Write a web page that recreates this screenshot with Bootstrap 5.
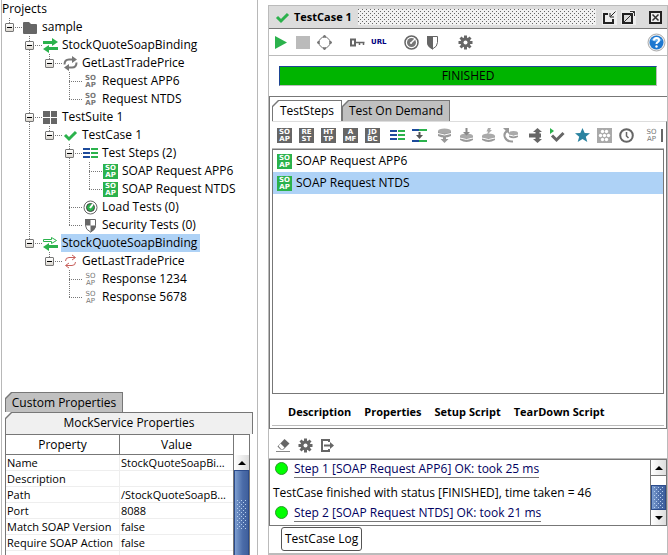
<!DOCTYPE html>
<html lang="en">
<head>
<meta charset="utf-8">
<meta name="viewport" content="width=device-width, initial-scale=1">
<title>TestCase 1</title>
<link rel="stylesheet" href="https://cdn.jsdelivr.net/npm/bootstrap@5.3.0/dist/css/bootstrap.min.css">
<style>
  body { font-family: "Open Sans", "Noto Sans", sans-serif; font-size: 12px; line-height: 18px; color: #000; background: #fff; }
  button { font: inherit; color: inherit; padding: 0; border: 0; background: none; }
  svg { display: block; flex: none; }
  .app { height: 100vh; }
  .side { width: 257px; margin-left: 1px; border-left: 1px solid #b8b8b8; border-right: 1px solid #b8b8b8; }

  /* project tree */
  .tree, .tree ul { list-style: none; margin: 0; padding: 0; }
  .tree { padding-left: 3px; }
  .tree ul { padding-left: 20px; }
  .tree li {
    background:
      repeating-linear-gradient(to bottom, #777 0 1px, transparent 1px 2px) 4px 0 / 1px 100% no-repeat,
      repeating-linear-gradient(to right, #777 0 1px, transparent 1px 2px) 4px 9px / 13px 1px no-repeat;
  }
  .tree li:last-child { background-size: 1px 9px, 13px 1px; }
  .node { height: 18px; white-space: nowrap; }
  .fold { width: 9px; height: 9px; border: 1px solid #777; border-radius: 1px; background: linear-gradient(#000, #000) center / 5px 1px no-repeat, linear-gradient(#fff, #dcd8d0); flex: none; margin-right: 9px; }
  .leaf { padding-left: 18px; }
  .node-text { margin-left: 3px; padding: 0 3px 0 1px; }
  .picked { background: #aed2f6; }

  /* small square icons made of four letters */
  .chip { display: block; flex: none; width: 15px; height: 15px; padding-top: 1px; text-align: center; white-space: nowrap; font: 700 7px/7px "DejaVu Sans", sans-serif; color: #777; overflow: hidden; }
  .chip-gray { background: #666; color: #fff; }
  .chip-green { background: #2bb24c; color: #fff; }
  .chip-light { color: #777; font-weight: 400; }

  /* tabs with a cut top-left corner */
  .cut-tab { background: #777; padding: 1px 1px 0; clip-path: polygon(0 6px, 6px 0, 100% 0, 100% 100%, 0 100%); }
  .cut-face { display: block; background: #c0c0c0; clip-path: polygon(0 6px, 6px 0, 100% 0, 100% 100%, 0 100%); }
  .face-gray { background: #f0f0f0; }
  .face-white { background: #fff; }
  .props { margin: 0 4px 0 3px; height: 163px; }
  .props-tab1 { width: 118px; height: 20px; line-height: 20px; }
  .props-tab2 { height: 21px; line-height: 20px; }
  .props-box { border: 1px solid #777; border-bottom: 0; margin-right: 3px; }
  .props-grid { table-layout: fixed; border-collapse: separate; border-spacing: 0; }
  .props-grid th { height: 20px; padding: 0; font-weight: 400; text-align: center; border-right: 1px solid #777; border-bottom: 1px solid #777; line-height: 19px; }
  .props-grid td { height: 16px; font-size: 11px; line-height: 15px; padding: 0 1px; border-right: 1px solid #eee; border-bottom: 1px solid #eee; white-space: nowrap; overflow: hidden; text-overflow: ellipsis; }
  .scroll { width: 16px; flex: none; }
  .scroll-props { padding-top: 20px; border-left: 1px solid #777; margin-left: -1px; }
  .scroll-btn { height: 15px; background: linear-gradient(90deg, #fff, #ddd); display: flex; align-items: center; justify-content: center; flex: none; }
  .thumb { background: linear-gradient(90deg, #7d9ed0, #4a6ba8 60%, #40609c); border: 1px solid #2c4c8c; padding: 1px; }
  .grip { margin: 0 1px; background: conic-gradient(at 1px 1px, transparent 75%, #b8d0f0 0) 0 0 / 4px 4px, conic-gradient(at 1px 1px, transparent 75%, #b8d0f0 0) 2px 2px / 4px 4px; }
  .grip-props { height: 30px; margin-top: 28px; }

  /* test case window */
  .win { margin: 5px 0 0 10px; border: 1px solid #bbb; border-bottom-width: 2px; min-width: 0; }
  .win-title { height: 23px; background: #dcdcdc; border-bottom: 1px solid #777; padding: 0 4px 0 6px; }
  .win-title h1 { font-size: 11px; font-weight: 700; line-height: 20px; margin: 0 6px 0 4px; }
  .hatch { height: 16px; background: conic-gradient(at 1px 1px, transparent 75%, #666 0) 0 0 / 4px 4px, conic-gradient(at 1px 1px, transparent 75%, #666 0) 2px 2px / 4px 4px, #f2f2f2; }
  .win-keys { margin-left: 6px; }
  .bar { height: 27px; gap: 18px; border-bottom: 1px solid #bbb; padding: 0 1px 0 6px; }
  .bar-set { gap: 6px; }
  .url { color: #000080; font: 700 7px/12px "DejaVu Sans", sans-serif; width: 15px; white-space: nowrap; }
  .done { margin: 10px; height: 20px; line-height: 17px; background: #00b400; border: 1px solid #bbb; border-top-color: #1d4594; border-left-color: #1d4594; text-align: center; }
  .steps { border: 1px solid #777; border-right: 0; padding: 3px 0 0 2px; min-height: 0; }
  .steps .cut-tab { line-height: 20px; }
  .steps .cut-face { height: 20px; }
  .tab-a { width: 70px; }
  .tab-b { width: 108px; }
  .steps-body { border-top: 1px solid #ddd; border-right: 1px solid #777; padding: 0 2px 2px 0; min-height: 0; }
  .steps-tools { height: 27px; gap: 10px; padding-left: 5px; overflow: hidden; border-bottom: 1px solid #bbb; }
  .steps-set { gap: 7px; }
  .steps-end { gap: 2px; }
  .steps-list { border: 1px solid #777; }
  .step { height: 22px; padding: 0 4px; gap: 4px; text-align: left; }
  .scripts { gap: 13px; height: 32px; padding: 4px 0 0 16px; border-bottom: 1px solid #bbb; white-space: nowrap; font-size: 11px; font-weight: 700; }
  .log-tools { height: 30px; gap: 7px; padding: 4px 0 0 7px; border-bottom: 1px solid #bbb; }
  .log { border: 1px solid #777; height: 67px; }
  .log-lines { min-width: 0; white-space: nowrap; overflow: hidden; }
  .log-line { height: 22px; padding-left: 5px; }
  .log-line a { color: #000060; line-height: 17px; text-decoration: none; border-bottom: 1px solid #777; }
  .log-note { padding: 2px 0 0 3px; height: 22px; }
  .dot { width: 13px; height: 13px; border-radius: 50%; background: #0f0; border: 1px solid #2a9a2a; margin: 2px 6px 0 0; flex: none; }
  .scroll-log { border-left: 1px solid #777; }
  .track { height: 10px; border-top: 1px solid #777; }
  .log-foot { height: 27px; padding: 1px 0 0 12px; }
  .log-foot button { border: 1px solid #555; border-radius: 3px; padding: 0 3px; height: 24px; line-height: 22px; }
</style>
<script src="https://cdn.jsdelivr.net/npm/bootstrap@5.3.0/dist/js/bootstrap.bundle.min.js"></script>
</head>
<body>
<svg width="0" height="0" class="position-absolute" aria-hidden="true">
  <symbol id="check" viewBox="0 0 15 15"><path d="M2 7l4 4 7-7" fill="none" stroke="#2bb24c" stroke-width="3"/></symbol>
  <symbol id="gear" viewBox="0 0 15 15"><path d="M7.500 .5v14M.5 7.500h14M2.500 2.500l10 10M12.500 2.500l-10 10" stroke="#666" stroke-width="3"/><circle cx="7.500" cy="7.500" r="5" fill="#666"/><circle cx="7.500" cy="7.500" r="2" fill="#fff"/></symbol>
  <symbol id="rows" viewBox="0 0 15 15"><path d="M0 3h7M0 7h7M0 11h7" stroke="#1d4b9b" stroke-width="2"/><path d="M8 3h7M8 7h7M8 11h7" stroke="#2bb24c" stroke-width="2"/></symbol>
</svg>

<div class="app d-flex overflow-hidden">
  <aside class="side d-flex flex-column flex-shrink-0">
    <div>Projects</div>
    <ul class="tree flex-grow-1">
      <li><div class="node d-flex align-items-center"><button class="fold" aria-label="Collapse sample"></button><svg width="15" height="15"><path d="M0 3q0-1 1-1h5l2 2h5q1 0 1 1v8q0 1-1 1H1q-1 0-1-1z" fill="#666"/></svg><span class="node-text">sample</span></div>
        <ul>
          <li><div class="node d-flex align-items-center"><button class="fold" aria-label="Collapse binding"></button><svg width="15" height="15"><path d="M0 3h9V0l6 4-6 4V6H0zM15 9H6V7l-6 4 6 4v-3h9z" fill="#2bb24c"/></svg><span class="node-text">StockQuoteSoapBinding</span></div>
            <ul><li><div class="node d-flex align-items-center"><button class="fold" aria-label="Collapse operation"></button><svg width="15" height="15"><path d="M1.500 8.500q0-5 4.500-5h4M13.500 6.500q0 5-4.500 5H5" fill="none" stroke="#777" stroke-width="2"/><path d="M9 0l5 3.500L9 7zM6 8l-5 3.500L6 15z" fill="#777"/></svg><span class="node-text">GetLastTradePrice</span></div>
              <ul>
                <li><div class="node leaf d-flex align-items-center"><span class="chip">SO<br>AP</span><span class="node-text">Request APP6</span></div></li>
                <li><div class="node leaf d-flex align-items-center"><span class="chip">SO<br>AP</span><span class="node-text">Request NTDS</span></div></li>
              </ul></li></ul></li>
          <li><div class="node d-flex align-items-center"><button class="fold" aria-label="Collapse suite"></button><svg width="15" height="15"><path d="M0 1h7v6H0zM8 1h6v6H8zM0 8h7v6H0zM8 8h6v6H8z" fill="#666"/></svg><span class="node-text">TestSuite 1</span></div>
            <ul><li><div class="node d-flex align-items-center"><button class="fold" aria-label="Collapse test case"></button><svg width="15" height="15"><use href="#check"/></svg><span class="node-text">TestCase 1</span></div>
              <ul>
                <li><div class="node d-flex align-items-center"><button class="fold" aria-label="Collapse steps"></button><svg width="15" height="15"><use href="#rows"/></svg><span class="node-text">Test Steps (2)</span></div>
                  <ul>
                    <li><div class="node leaf d-flex align-items-center"><span class="chip chip-green">SO<br>AP</span><span class="node-text">SOAP Request APP6</span></div></li>
                    <li><div class="node leaf d-flex align-items-center"><span class="chip chip-green">SO<br>AP</span><span class="node-text">SOAP Request NTDS</span></div></li>
                  </ul></li>
                <li><div class="node leaf d-flex align-items-center"><svg width="15" height="15"><circle cx="7.500" cy="7.500" r="6.500" fill="#fff" stroke="#666"/><circle cx="7.500" cy="7.500" r="4" fill="#2bb24c" stroke="#444"/><path d="M7 8l3-4" stroke="#fff" stroke-width="2"/></svg><span class="node-text">Load Tests (0)</span></div></li>
                <li><div class="node leaf d-flex align-items-center"><svg width="15" height="15"><path d="M2.500 1.500h10v6q0 4-5 6.500q-5-2.500-5-6.500z" fill="#fff" stroke="#666"/><path d="M2 1h5.500v6.500H2zM7.500 7.500H13q0 4-5.500 7z" fill="#666"/></svg><span class="node-text">Security Tests (0)</span></div></li>
              </ul></li></ul></li>
          <li><div class="node d-flex align-items-center"><button class="fold" aria-label="Collapse mock service"></button><svg width="15" height="15"><path d="M.5 3.500h8v-2l5 3-5 3v-2h-8z" fill="#fff" stroke="#2bb24c"/><path d="M15 9H6V7l-6 4 6 4v-3h9z" fill="#2bb24c"/></svg><span class="node-text picked">StockQuoteSoapBinding</span></div>
            <ul><li><div class="node d-flex align-items-center"><button class="fold" aria-label="Collapse mock operation"></button><svg width="15" height="15"><path d="M2.500 7q0-3.500 3.500-3.500h6M9 1l3.500 2.500L9 6M12.500 8q0 3.500-3.500 3.500H3M6 9l-3.500 2.500L6 14" fill="none" stroke="#c8605c"/></svg><span class="node-text">GetLastTradePrice</span></div>
              <ul>
                <li><div class="node leaf d-flex align-items-center"><span class="chip chip-light">SO<br>AP</span><span class="node-text">Response 1234</span></div></li>
                <li><div class="node leaf d-flex align-items-center"><span class="chip chip-light">SO<br>AP</span><span class="node-text">Response 5678</span></div></li>
              </ul></li></ul></li>
        </ul></li>
    </ul>

    <section class="props overflow-hidden flex-shrink-0">
      <button class="cut-tab props-tab1 d-block"><span class="cut-face">Custom Properties</span></button>
      <button class="cut-tab d-block w-100"><span class="cut-face face-gray props-tab2">MockService Properties</span></button>
      <div class="props-box d-flex">
        <div class="flex-grow-1">
        <table class="props-grid w-100">
          <thead><tr><th>Property</th><th>Value</th></tr></thead>
          <tbody>
            <tr><td>Name</td><td>StockQuoteSoapBi...</td></tr>
            <tr><td>Description</td><td></td></tr>
            <tr><td>Path</td><td>/StockQuoteSoapB...</td></tr>
            <tr><td>Port</td><td>8088</td></tr>
            <tr><td>Match SOAP Version</td><td>false</td></tr>
            <tr><td>Require SOAP Action</td><td>false</td></tr>
            <tr><td>Dispatch Responses</td><td>false</td></tr>
          </tbody>
        </table>
        </div>
        <div class="scroll scroll-props d-flex flex-column">
          <button class="scroll-btn" aria-label="Scroll properties up"><svg width="8" height="4"><path d="M0 4l4-4 4 4z"/></svg></button>
          <div class="thumb flex-grow-1"><div class="grip grip-props"></div></div>
        </div>
      </div>
    </section>
  </aside>

  <main class="win d-flex flex-column flex-grow-1">
    <header class="win-title d-flex align-items-center flex-shrink-0">
      <svg width="15" height="15"><use href="#check"/></svg><h1>TestCase 1</h1><div class="hatch flex-grow-1"></div>
      <div class="win-keys d-flex">
        <button aria-label="Restore"><svg width="15" height="15"><path d="M0 0h15v15H0z" fill="#eee"/><path d="M6 4H2v9h9V9" fill="none" stroke="#222" stroke-width="2"/><path d="M13.500 1.500l-5 5M8 3v4h4" fill="none" stroke="#222"/></svg></button>
        <button class="ms-1" aria-label="Maximize"><svg width="15" height="15"><path d="M0 0h15v15H0z" fill="#eee"/><path d="M2 4h9v9H2z" fill="#ddd" stroke="#222" stroke-width="2"/><path d="M3 12L13.500 1.500M9 1.500h4.500V6" fill="none" stroke="#333"/></svg></button>
        <button class="ms-2 ps-1" aria-label="Close"><svg width="15" height="15"><path d="M2 2h11v11H2z" fill="#eee" stroke="#222" stroke-width="2"/><path d="M4.500 4.500l6 6M10.500 4.500l-6 6" stroke="#333" stroke-width="1.500"/></svg></button>
      </div>
    </header>
    <div class="bar d-flex align-items-center flex-shrink-0">
      <div class="bar-set d-flex align-items-center">
        <button aria-label="Run"><svg width="15" height="15"><path d="M0 1l12 6.500L0 14z" fill="#2bb24c"/></svg></button>
        <button aria-label="Stop"><svg width="15" height="15"><path d="M0 1h14v13H0z" fill="#bbb"/></svg></button>
        <button aria-label="Loop"><svg width="15" height="15"><circle cx="7.500" cy="7.500" r="5.500" fill="none" stroke="#777"/><path d="M6 2h3L7.500 0zM6 13h3l-1.500 2zM2 6v3L0 7.500zM13 6v3l2-1.500z" fill="#777" stroke="#777"/></svg></button>
      </div>
      <div class="bar-set d-flex align-items-center">
        <button aria-label="Credentials"><svg width="15" height="15"><path d="M1 4.500h4v6H1z" fill="none" stroke="#666" stroke-width="2"/><path d="M6 7.500h8.500M9.500 8v2M13.500 8v2" fill="none" stroke="#666" stroke-width="1.500"/></svg></button>
        <button class="url">URL</button>
      </div>
      <div class="bar-set d-flex align-items-center">
        <button aria-label="Load test"><svg width="15" height="15"><circle cx="7.500" cy="7.500" r="6.500" fill="#fff" stroke="#666" stroke-width="1.500"/><circle cx="7.500" cy="7.500" r="4.500" fill="#777"/><path d="M7 8l4-4" stroke="#fff" stroke-width="1.500"/><circle cx="7" cy="8" r="1" fill="#fff"/></svg></button>
        <button aria-label="Security test"><svg width="15" height="15"><path d="M2.500 1.500h10v6q0 4-5 6.500q-5-2.500-5-6.500z" fill="#fff" stroke="#666"/><path d="M2 1h6v13.500Q2 12 2 7.500z" fill="#666"/></svg></button>
      </div>
      <button aria-label="Options"><svg width="15" height="15"><use href="#gear"/></svg></button>
      <button class="ms-auto" aria-label="Help"><svg width="19" height="19"><circle cx="9.500" cy="9.500" r="8.500" fill="#eee" stroke="#aaa"/><circle cx="9.500" cy="9.500" r="7" fill="#1e78d0"/><path d="M4 7q5-6 11 0q-4 3-11 0z" fill="#6fb4ee"/><path d="M7 7.500q0-2.500 2.500-2.500T12 7.200q0 1.300-1.300 2T9.500 11" fill="none" stroke="#fff" stroke-width="2"/><circle cx="9.500" cy="13.500" r="1.200" fill="#fff"/></svg></button>
    </div>
    <div class="done flex-shrink-0" role="status">FINISHED</div>

    <section class="steps d-flex flex-column flex-grow-1">
      <div class="d-flex flex-shrink-0">
        <button class="cut-tab tab-a"><span class="cut-face face-white">TestSteps</span></button>
        <button class="cut-tab tab-b"><span class="cut-face">Test On Demand</span></button>
      </div>
      <div class="steps-body d-flex flex-column flex-grow-1">
        <div class="steps-tools d-flex align-items-center flex-shrink-0">
          <div class="steps-set d-flex">
            <button class="chip chip-gray">SO<br>AP</button>
            <button class="chip chip-gray">RE<br>ST</button>
            <button class="chip chip-gray">HT<br>TP</button>
            <button class="chip chip-gray">A<br>MF</button>
            <button class="chip chip-gray">JD<br>BC</button>
          </div>
          <div class="steps-set d-flex">
            <button aria-label="Properties step"><svg width="15" height="15"><use href="#rows"/></svg></button>
            <button aria-label="Transfer step"><svg width="15" height="15"><path d="M0 2h7M0 13h7" stroke="#1d4b9b" stroke-width="2"/><path d="M7 2h8M7 13h8" stroke="#2bb24c" stroke-width="2"/><path d="M7.500 4v4" stroke="#555" stroke-width="2"/><path d="M4 7h7l-3.500 4z" fill="#555"/></svg></button>
          </div>
          <div class="steps-set d-flex">
            <button aria-label="Data source"><svg width="15" height="15"><path d="M1 3v5q6.500 3 13 0V3z" fill="#999"/><ellipse cx="7.500" cy="3" rx="6.500" ry="2.500" fill="#aaa"/><path d="M1 5.500q6.500 3 13 0" fill="none" stroke="#fff"/><path d="M6 9h3v2h2.500l-4 4-4-4H6z" fill="#999"/></svg></button>
            <button aria-label="Data sink"><svg width="15" height="15"><path d="M1 8v4q6.500 4 13 0V8z" fill="#999"/><ellipse cx="7.500" cy="8" rx="6.500" ry="2.500" fill="#aaa"/><path d="M1 10q6.500 3 13 0" fill="none" stroke="#fff"/><path d="M6.500 0h2v4H11L7.500 7.500 4 4h2.500z" fill="#888"/></svg></button>
            <button aria-label="Data generator"><svg width="15" height="15"><path d="M1 8v4q6.500 4 13 0V8z" fill="#999"/><ellipse cx="7.500" cy="8" rx="6.500" ry="2.500" fill="#aaa"/><path d="M1 10q6.500 3 13 0" fill="none" stroke="#fff"/><path d="M7 0h3L9 2h2L6 7l1-3.500H5.500z" fill="#aaa"/></svg></button>
            <button aria-label="Data source loop"><svg width="15" height="15"><path d="M5 2.500Q0 5 2 9.500t8 4" fill="none" stroke="#999" stroke-width="2"/><path d="M0 0h6v6z" fill="#999"/><path d="M6 5v4q4 2.500 9 0V5z" fill="#999"/><ellipse cx="10.500" cy="5" rx="4.500" ry="2" fill="#aaa"/><path d="M6 7q4.500 2 9 0" fill="none" stroke="#fff"/></svg></button>
          </div>
          <div class="steps-set d-flex">
            <button aria-label="Conditional goto"><svg width="15" height="15"><path d="M1 7.500h8M9.500 3v9M9.500 7.500H13" stroke="#666" stroke-width="4"/><path d="M5 4h9L9.500 0zM5 11h9l-4.500 4z" fill="#666"/></svg></button>
            <button aria-label="Run test case"><svg width="15" height="15"><path d="M0 0l4 3-4 3z" fill="#2bb24c"/><path d="M2 7.500l4.500 4.500L13.500 5" fill="none" stroke="#666" stroke-width="3"/></svg></button>
          </div>
          <div class="steps-set d-flex">
            <button aria-label="Groovy script"><svg width="15" height="15"><path d="M7.500 0l2.200 5 5.300.3-4.200 3.500 1.500 5.200-4.800-3-4.800 3 1.500-5.200L0 5.300 5.300 5z" fill="#2b83a0"/></svg></button>
            <button aria-label="Mock response"><svg width="15" height="15"><path d="M0 0h15v15H0z" fill="#aaa"/><g fill="#fff"><circle cx="5.500" cy="3.500" r="1.700"/><circle cx="9.500" cy="3.500" r="1.700"/><circle cx="3.500" cy="7.500" r="1.700"/><circle cx="7.500" cy="7.500" r="1.700"/><circle cx="11.500" cy="7.500" r="1.700"/><circle cx="5.500" cy="11.500" r="1.700"/><circle cx="9.500" cy="11.500" r="1.700"/></g></svg></button>
            <button aria-label="Delay"><svg width="15" height="15"><circle cx="7.500" cy="7.500" r="6.300" fill="#fff" stroke="#666" stroke-width="2"/><path d="M7.500 4v4l2 2" fill="none" stroke="#666" stroke-width="1.500"/></svg></button>
          </div>
          <div class="steps-end d-flex">
            <button class="chip chip-light">SO<br>AP</button>
            <button aria-label="More steps"><svg width="15" height="15"><path d="M0 1h2v13H0z" fill="#666"/></svg></button>
          </div>
        </div>
        <div class="steps-list flex-grow-1">
          <button class="step d-flex align-items-center w-100"><span class="chip chip-green">SO<br>AP</span>SOAP Request APP6</button>
          <button class="step picked d-flex align-items-center w-100"><span class="chip chip-green">SO<br>AP</span>SOAP Request NTDS</button>
        </div>
        <div class="scripts d-flex align-items-center flex-shrink-0">
          <button>Description</button><button>Properties</button><button>Setup Script</button><button>TearDown Script</button>
        </div>
      </div>
    </section>

    <div class="log-tools d-flex align-items-center flex-shrink-0">
      <button aria-label="Clear log"><svg width="15" height="15"><path d="M8.500 1l5 4.500-6 6h-3l-3-3z" fill="#666"/><path d="M4.500 5.500l4 4-1.500 1.500H5L2.500 8z" fill="#fff"/><path d="M0 13.500h14" stroke="#888"/></svg></button>
      <button aria-label="Log options"><svg width="15" height="15"><use href="#gear"/></svg></button>
      <button aria-label="Export log"><svg width="15" height="15"><path d="M9 4V2H2v11h7v-2" fill="none" stroke="#666" stroke-width="2"/><path d="M4 7.500h7" stroke="#666" stroke-width="2"/><path d="M10 4l4 3.500-4 3.500z" fill="#666"/></svg></button>
    </div>
    <div class="log d-flex flex-shrink-0">
      <div class="log-lines flex-grow-1">
        <div class="log-line d-flex align-items-start"><span class="dot"></span><a href="#step1">Step 1 [SOAP Request APP6] OK: took 25 ms</a></div>
        <div class="log-note">TestCase finished with status [FINISHED], time taken = 46</div>
        <div class="log-line d-flex align-items-start"><span class="dot"></span><a href="#step2">Step 2 [SOAP Request NTDS] OK: took 21 ms</a></div>
      </div>
      <div class="scroll scroll-log d-flex flex-column">
        <button class="scroll-btn" aria-label="Scroll log up"><svg width="8" height="4"><path d="M0 4l4-4 4 4z"/></svg></button>
        <div class="track"></div>
        <div class="thumb flex-grow-1"><div class="grip h-100"></div></div>
        <button class="scroll-btn" aria-label="Scroll log down"><svg width="8" height="4"><path d="M0 0l4 4 4-4z"/></svg></button>
      </div>
    </div>
    <div class="log-foot flex-shrink-0"><button>TestCase Log</button></div>
  </main>
</div>
</body>
</html>
